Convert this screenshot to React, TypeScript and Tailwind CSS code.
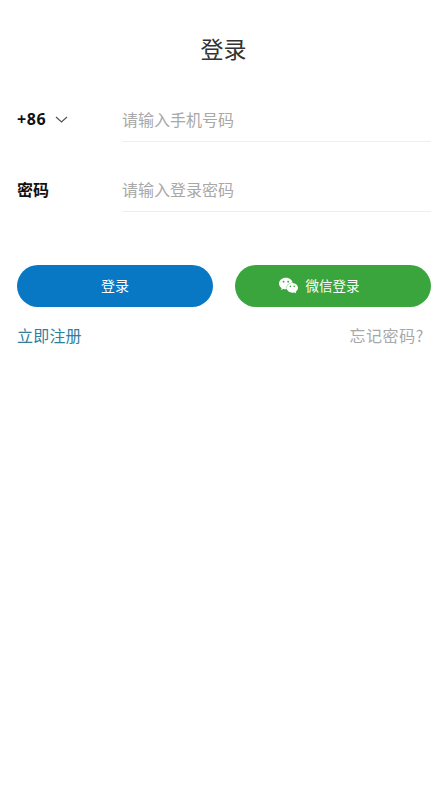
import React from "react";
import { SiWechat } from "react-icons/si";

export default function App() {
  return (
    <div className="w-[447px] h-[797px] bg-white flex flex-col overflow-hidden [font-family:'Noto_Sans_CJK_SC','Noto_Sans',sans-serif]">
      <div className="pt-[34px] h-[98px] text-center text-[23px] leading-[28px] text-[#333333]">登录</div>

      <div className="flex pl-[17px] pr-[16px] h-[44px]">
        <div className="w-[105px] flex items-center gap-[9px] h-[44px] pb-[2px]">
          <span className="text-[16px] font-bold text-[#111111] tracking-[0.6px] [font-family:'Open_Sans',sans-serif] leading-none">+86</span>
          <svg width="13" height="7" viewBox="0 0 13 7" fill="none" stroke="#555555" strokeWidth="1.2">
            <path d="M1 1 L6.5 6 L12 1" />
          </svg>
        </div>
        <div className="flex-1 h-[44px] pb-[2px] border-b border-[#eeeeee] flex items-center text-[16px] text-[#a8a8a8]">请输入手机号码</div>
      </div>

      <div className="flex pl-[17px] pr-[16px] h-[44px] mt-[26px]">
        <div className="w-[105px] flex items-center h-[44px] pb-[2px] text-[16px] font-bold text-[#111111]">密码</div>
        <div className="flex-1 h-[44px] pb-[2px] border-b border-[#eeeeee] flex items-center text-[16px] text-[#a8a8a8]">请输入登录密码</div>
      </div>

      <div className="flex justify-between pl-[17px] pr-[16px] mt-[53px]">
        <button className="w-[196px] h-[42px] pb-[1px] rounded-full bg-[#0878c4] text-white text-[14px] flex items-center justify-center">登录</button>
        <button className="w-[196px] h-[42px] pb-[1px] rounded-full bg-[#3aa53c] text-white text-[13.5px] flex items-center justify-center gap-[8px] pr-[28px]">
          <SiWechat className="w-[19px] h-[19px] text-white" />
          <span>微信登录</span>
        </button>
      </div>

      <div className="flex justify-between items-center pl-[17px] pr-[23px] mt-[17px] text-[16px] leading-[22px]">
        <span className="text-[#2f7f9f] tracking-[0.2px]">立即注册</span>
        <span className="text-[#a8a8a8] tracking-[0.6px]">忘记密码?</span>
      </div>
    </div>
  );
}
